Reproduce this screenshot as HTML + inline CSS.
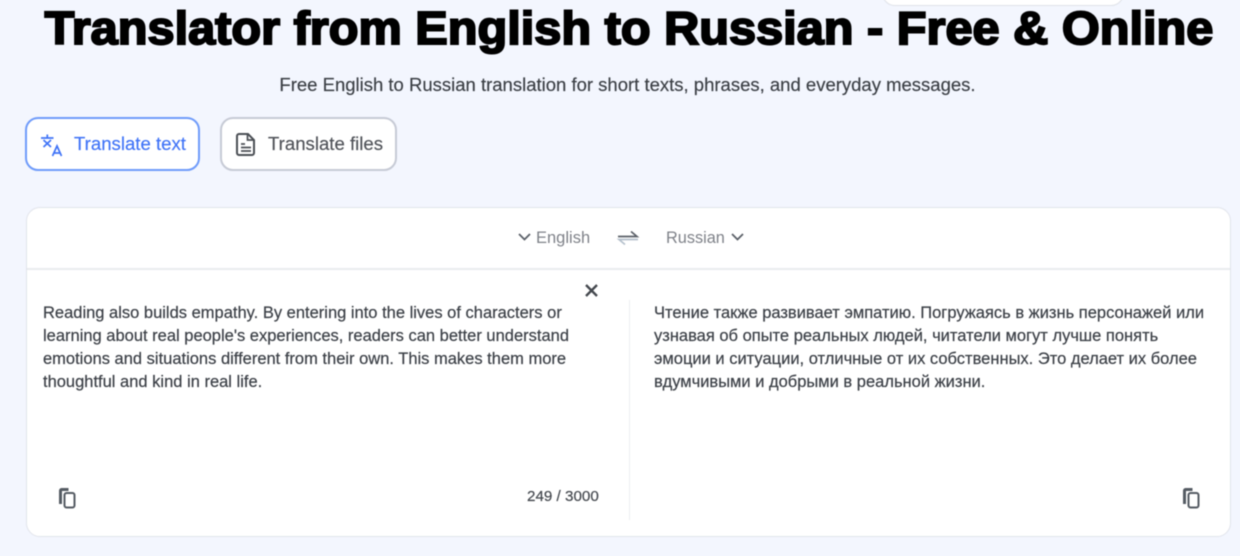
<!DOCTYPE html>
<html><head><meta charset="utf-8"><style>
html,body{margin:0;padding:0}
body{width:1240px;height:556px;background:#f3f6fe;overflow:hidden;position:relative;font-family:"Liberation Sans",sans-serif}
.w{position:absolute;left:0;top:0;width:1240px;height:556px;filter:blur(.5px)}
.t{position:absolute;white-space:nowrap}
.a{position:absolute;box-sizing:border-box}
svg{position:absolute;overflow:visible}
.p{font-size:16.5px;color:#3c4047;line-height:23px;-webkit-text-stroke:.2px #3c4047}
</style></head><body><div class="w">
<div class="a" style="left:882px;top:-20px;width:242px;height:26px;background:#fff;border:1px solid #dfe2e8;border-radius:13px"></div>
<div class="t" style="left:0;top:0;font-size:46.5px;line-height:56px;font-weight:700;color:#000;-webkit-text-stroke:2px #000;width:1258px;text-align:center;transform:scaleX(1.047);transform-origin:629px 0">Translator from English to Russian - Free &amp; Online</div>
<div class="t" style="left:0;top:74px;width:1255px;text-align:center;font-size:18.5px;line-height:22px;color:#3a3e44;-webkit-text-stroke:.15px #3a3e44">Free English to Russian translation for short texts, phrases, and everyday messages.</div>

<div class="a" style="left:25px;top:117px;width:175px;height:54px;background:#fff;border:2px solid #6f9bfa;border-radius:13px"></div>
<svg style="left:41px;top:132px" width="23" height="25" viewBox="0 0 23 25" fill="none" stroke="#3f73f7" stroke-width="1.700"><path d="M0 6h12.500M6.300 2.500v3.500M2.500 8l7.500 7M10 8l-7.500 7"/><path d="M11.500 24l4.500-10 4.500 10M13.200 21h6"/></svg>
<div class="t" style="left:74px;top:133px;font-size:18.6px;line-height:22px;color:#3f73f7;-webkit-text-stroke:.15px #3f73f7">Translate text</div>

<div class="a" style="left:220px;top:117px;width:177px;height:54px;background:#fff;border:2px solid #c6cad5;border-radius:13px"></div>
<svg style="left:236px;top:133px" width="20" height="23" viewBox="0 0 20 23" fill="none" stroke="#4b4f55" stroke-width="2"><path d="M3 1h9l6 6v13a2 2 0 0 1-2 2H3a2 2 0 0 1-2-2V3a2 2 0 0 1 2-2z"/><path d="M11.500 1v6h6M5 11h4M5 14.500h10M5 18h10" stroke-width="1.700"/></svg>
<div class="t" style="left:268px;top:133px;font-size:18.6px;line-height:22px;color:#4f5258;-webkit-text-stroke:.15px #4f5258">Translate files</div>

<div class="a" style="left:26px;top:207px;width:1205px;height:330px;background:#fff;border:1px solid #e1e4eb;border-radius:14px"></div>
<div class="a" style="left:27px;top:268px;width:1203px;height:2px;background:#e9ebef"></div>
<div class="a" style="left:629px;top:300px;width:1px;height:220px;background:#eceef1"></div>

<svg style="left:518px;top:233px" width="13" height="8" viewBox="0 0 13 8" fill="none" stroke="#5b6068" stroke-width="1.800"><path d="M1 1l5.500 5.500L12 1"/></svg>
<div class="t" style="left:536px;top:228px;font-size:16.5px;line-height:20px;color:#7f8289">English</div>
<svg style="left:617px;top:230px" width="22" height="16" viewBox="0 0 22 16" fill="none" stroke-width="1.700"><path d="M1 6.500h19L14 1.500" stroke="#5b6068"/><path d="M21 9.500H2l6 5" stroke="#b5c0cc"/></svg>
<div class="t" style="left:666px;top:228px;font-size:16.3px;line-height:20px;color:#7f8289">Russian</div>
<svg style="left:731px;top:233px" width="13" height="8" viewBox="0 0 13 8" fill="none" stroke="#5b6068" stroke-width="1.800"><path d="M1 1l5.500 5.500L12 1"/></svg>

<svg style="left:585px;top:284px" width="13" height="13" viewBox="0 0 13 13" fill="none" stroke="#43474d" stroke-width="2.300"><path d="M1 1l11 11M12 1L1 12"/></svg>

<div class="t p" style="left:43px;top:301.500px">Reading also builds empathy. By entering into the lives of characters or<br>learning about real people's experiences, readers can better understand<br>emotions and situations different from their own. This makes them more<br>thoughtful and kind in real life.</div>
<div class="t p" style="left:654px;top:301.500px">Чтение также развивает эмпатию. Погружаясь в жизнь персонажей или<br>узнавая об опыте реальных людей, читатели могут лучше понять<br>эмоции и ситуации, отличные от их собственных. Это делает их более<br>вдумчивыми и добрыми в реальной жизни.</div>

<svg style="left:58px;top:488px" width="18" height="21" viewBox="0 0 18 21" fill="none" stroke="#555b63" stroke-width="2"><path d="M2.500 16V2.500C2.500 2 3 1.500 3.500 1.500h7" stroke-width="3"/><rect x="6.500" y="5" width="10" height="14.500" rx="2"/></svg>
<div class="t" style="left:527px;top:488px;font-size:15.2px;line-height:18px;color:#45494f;-webkit-text-stroke:.2px #45494f">249 / 3000</div>
<svg style="left:1182px;top:488px" width="18" height="21" viewBox="0 0 18 21" fill="none" stroke="#555b63" stroke-width="2"><path d="M2.500 16V2.500C2.500 2 3 1.500 3.500 1.500h7" stroke-width="3"/><rect x="6.500" y="5" width="10" height="14.500" rx="2"/></svg>
</div></body></html>
